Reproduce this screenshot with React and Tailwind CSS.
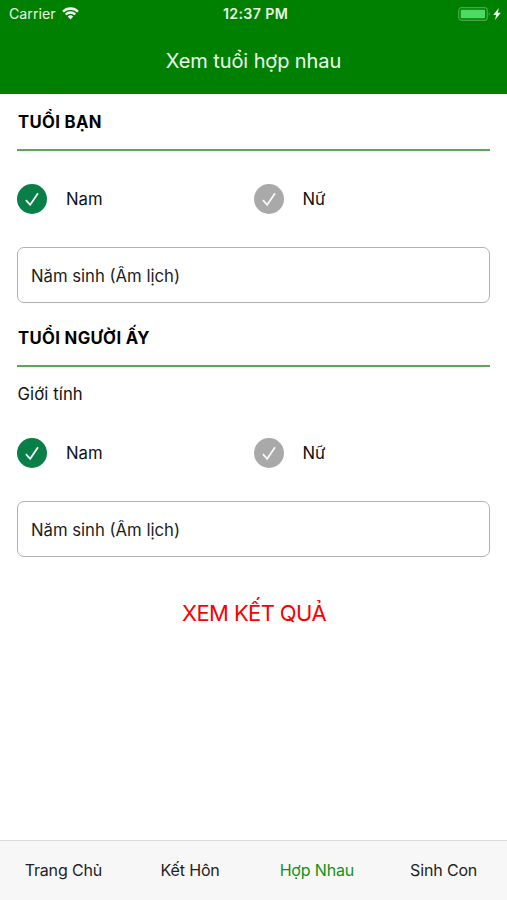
import { useState } from "react"

const tabs = ["Trang Chủ", "Kết Hôn", "Hợp Nhau", "Sinh Con"]

const StatusBar = () => {
  return (
    <div className="grid grid-cols-3 items-center h-[27px] pl-[9px] pr-[6px] text-[#e6f7e6]">
      <div className="flex items-center gap-[6px]">
        <span className="text-[14.2px]">Carrier</span>
        <svg width="17" height="13" viewBox="0 0 17 13" fill="none" stroke="#f2fff2" strokeWidth="2.3">
          <path d="M1 4.6 A10.6 10.6 0 0 1 16 4.6" />
          <path d="M3.7 7.5 A6.8 6.8 0 0 1 13.3 7.5" />
          <path d="M8.5 12.4 L5.8 9.6 A3.9 3.9 0 0 1 11.2 9.6 Z" fill="#f2fff2" stroke="none" />
        </svg>
      </div>
      <span className="pl-px text-center text-[14.2px] font-semibold tracking-[0.35px] whitespace-nowrap">12:37 PM</span>
      <div className="flex items-center justify-end gap-[2px]">
        <svg width="33" height="14" viewBox="0 0 33 14">
          <rect x="0.7" y="0.7" width="28.6" height="12.6" rx="3" fill="none" stroke="#4da64d" strokeWidth="1.2" />
          <rect x="2.7" y="2.7" width="24.4" height="8.6" rx="1" fill="#4cd964" />
          <path d="M30.8 4.8 Q33 7 30.8 9.2 Z" fill="#4da64d" />
        </svg>
        <svg width="8" height="12" viewBox="0 0 8 12" fill="#f2fff2">
          <path d="M5.8 0 L0.2 7 H3.2 L2 12 L7.8 4.8 H4.8 Z" />
        </svg>
      </div>
    </div>
  )
}

const RadioOption = ({ label, checked, onClick }) => {
  return (
    <button className="flex items-center gap-[19px] flex-1 cursor-pointer" onClick={onClick}>
      <span className={`flex items-center justify-center size-[30px] rounded-full ${checked ? "bg-[#087f46]" : "bg-[#a9a9a9]"}`}>
        <svg width="30" height="30" viewBox="0 0 30 30" fill="none" stroke="#f4fbf6" strokeWidth="1.8">
          <path d="M8.9 16.1 L13.2 20.8 L21 9.2" />
        </svg>
      </span>
      <span className="pt-px text-[16.7px]">{label}</span>
    </button>
  )
}

const GenderPicker = () => {
  const [gender, setGender] = useState("Nam")

  return (
    <div className="flex h-[30px]">
      <RadioOption label="Nam" checked={gender === "Nam"} onClick={() => setGender("Nam")} />
      <RadioOption label="Nữ" checked={gender === "Nữ"} onClick={() => setGender("Nữ")} />
    </div>
  )
}

const SectionTitle = ({ children }) => {
  return (
    <h2 className="flex items-center h-[57px] pt-[3px] pl-px border-b-2 border-[#55aa55] text-[16.7px] font-bold tracking-[0.35px] text-black">{children}</h2>
  )
}

const YearInput = () => {
  return (
    <input
      className="block w-full h-14 px-[13px] pt-px border border-[#b0b0b0] rounded-[7px] text-[16.7px] placeholder:text-[#1c1c1c] outline-none"
      placeholder="Năm sinh (Âm lịch)"
    />
  )
}

const App = () => {
  const [activeTab, setActiveTab] = useState("Hợp Nhau")

  return (
    <div className="flex flex-col h-screen bg-white text-[#111111] font-['Inter',sans-serif]">
      <header className="h-[94px] bg-[#008000] shrink-0">
        <StatusBar />
        <h1 className="flex items-center justify-center h-[67px] text-[20px] tracking-[-0.1px] text-[#effaef]">Xem tuổi hợp nhau</h1>
      </header>

      <main className="flex-1 px-[17px]">
        <SectionTitle>TUỔI BẠN</SectionTitle>
        <div className="pt-[33px] pb-[33px]">
          <GenderPicker />
        </div>
        <YearInput />

        <div className="mt-[7px]">
          <SectionTitle>TUỔI NGƯỜI ẤY</SectionTitle>
        </div>
        <p className="mt-[15px] pl-[0.5px] text-[16.7px] tracking-[0.1px] leading-6">Giới tính</p>
        <div className="pt-8 pb-[33px]">
          <GenderPicker />
        </div>
        <YearInput />

        <button className="block mx-auto mt-10 pl-px text-[22px] leading-8 tracking-[-0.6px] text-[#fa0000] cursor-pointer">XEM KẾT QUẢ</button>
      </main>

      <nav className="grid grid-cols-4 h-[60px] border-t border-[#dcdcdc] bg-[#f7f7f7] shrink-0">
        {tabs.map((tab) => (
          <button
            key={tab}
            className={`pb-[2px] text-[16px] tracking-[-0.15px] whitespace-nowrap cursor-pointer ${activeTab === tab ? "text-[#149114]" : "text-[#222222]"}`}
            onClick={() => setActiveTab(tab)}
          >
            {tab}
          </button>
        ))}
      </nav>
    </div>
  )
}

export default App
